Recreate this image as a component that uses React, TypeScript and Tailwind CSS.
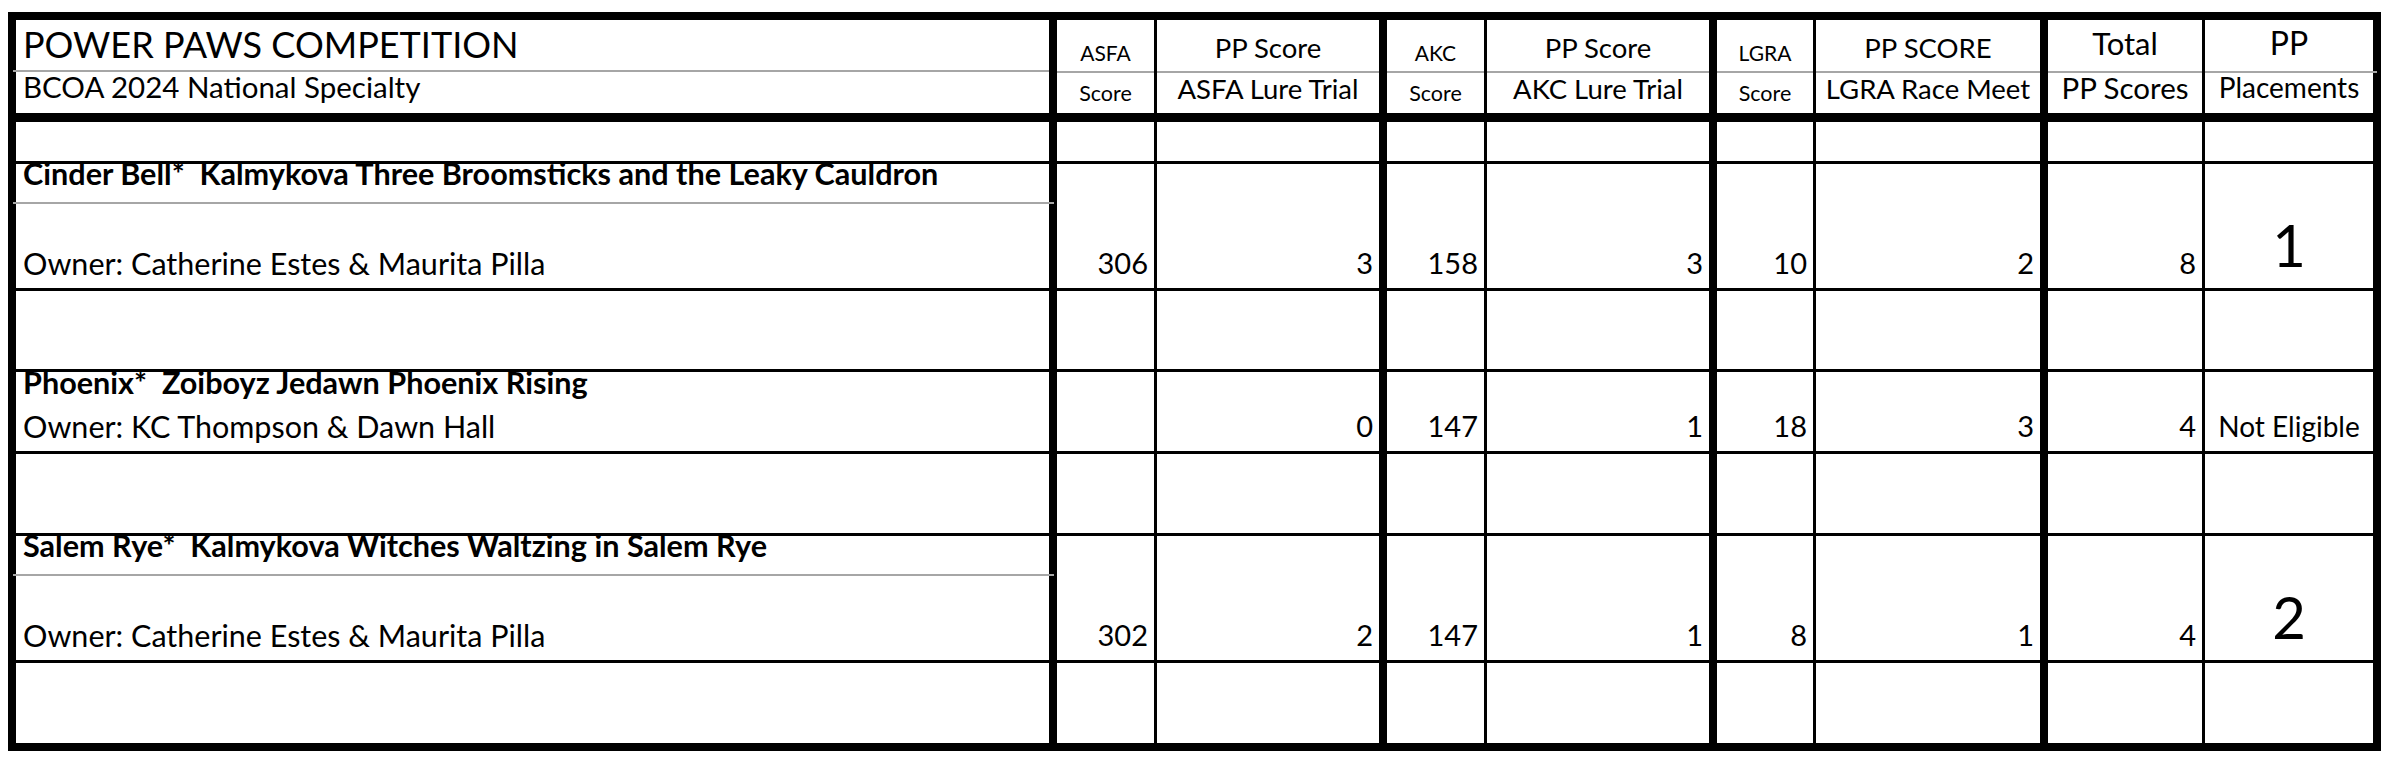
import React from 'react';

// column widths incl. right border
const COLS = [
  'w-[1041px] border-r-[8px]',
  'w-[100px] border-r-[3px]',
  'w-[230px] border-r-[8px]',
  'w-[100px] border-r-[3px]',
  'w-[230px] border-r-[8px]',
  'w-[99px] border-r-[3px]',
  'w-[232px] border-r-[8px]',
  'w-[157px] border-r-[3px]',
  'w-[168px]',
];

type Entry = {
  name: string;
  owner: string;
  asfa: string;
  asfaPP: string;
  akc: string;
  akcPP: string;
  lgra: string;
  lgraPP: string;
  total: string;
  place: string;
  tall: boolean;
};

const entries: Entry[] = [
  {
    name: 'Cinder Bell*\u00a0\u00a0Kalmykova Three Broomsticks and the Leaky Cauldron',
    owner: 'Owner: Catherine Estes & Maurita Pilla',
    asfa: '306', asfaPP: '3', akc: '158', akcPP: '3', lgra: '10', lgraPP: '2', total: '8', place: '1',
    tall: true,
  },
  {
    name: 'Phoenix*\u00a0\u00a0Zoiboyz Jedawn Phoenix Rising',
    owner: 'Owner: KC Thompson & Dawn Hall',
    asfa: '', asfaPP: '0', akc: '147', akcPP: '1', lgra: '18', lgraPP: '3', total: '4', place: 'Not Eligible',
    tall: false,
  },
  {
    name: 'Salem Rye*\u00a0\u00a0Kalmykova Witches Waltzing in Salem Rye',
    owner: 'Owner: Catherine Estes & Maurita Pilla',
    asfa: '302', asfaPP: '2', akc: '147', akcPP: '1', lgra: '8', lgraPP: '1', total: '4', place: '2',
    tall: true,
  },
];

const HeadCell = ({ col, top, bottom, topCls, bottomCls }: any) => (
  <div className={`${COLS[col]} border-black h-full flex flex-col shrink-0`}>
    <div className={`h-[51px] flex items-end justify-center leading-none whitespace-nowrap ${topCls}`}>{top}</div>
    <div className="h-[2px] bg-[#a6a6a6]" />
    <div className={`flex-1 flex items-end justify-center leading-none whitespace-nowrap ${bottomCls}`}>{bottom}</div>
  </div>
);

const EmptyRow = ({ h, last }: { h: string; last?: boolean }) => (
  <div className={`flex ${h} ${last ? '' : 'border-b-[3px] border-black'}`}>
    {COLS.map((c, i) => (
      <div key={i} className={`${c} border-black h-full shrink-0`} />
    ))}
  </div>
);

const Num = ({ col, value }: { col: number; value: string }) => (
  <div className={`${COLS[col]} border-black h-full shrink-0 flex items-end justify-end pr-[6px] pb-[11px] text-[29px] leading-none`}>
    {value}
  </div>
);

const EntryRow = ({ e }: { e: Entry }) => (
  <div className={`flex ${e.tall ? 'h-[127px]' : 'h-[82px]'} border-b-[3px] border-black`}>
    <div className={`${COLS[0]} border-black h-full shrink-0 flex flex-col`}>
      <div className={`${e.tall ? 'h-[38px]' : 'h-[39px]'} flex items-end pl-[7px] pb-[12px] text-[30.6px] font-bold leading-none whitespace-nowrap`}>
        {e.name}
      </div>
      <div className="h-[2px] bg-[#a6a6a6] -ml-[3px] -mr-[5px]" />
      <div className="flex-1 flex items-end pl-[7px] pb-[10px] text-[30.5px] leading-none whitespace-nowrap">
        {e.owner}
      </div>
    </div>
    <Num col={1} value={e.asfa} />
    <Num col={2} value={e.asfaPP} />
    <Num col={3} value={e.akc} />
    <Num col={4} value={e.akcPP} />
    <Num col={5} value={e.lgra} />
    <Num col={6} value={e.lgraPP} />
    <Num col={7} value={e.total} />
    {e.place === 'Not Eligible' ? (
      <div className={`${COLS[8]} h-full shrink-0 flex items-end justify-center pb-[11px] text-[28px] leading-none whitespace-nowrap`}>
        {e.place}
      </div>
    ) : (
      <div className={`${COLS[8]} h-full shrink-0 flex items-end justify-center pb-[14px] text-[58px] leading-none`}>
        {e.place}
      </div>
    )}
  </div>
);

export default function App() {
  return (
    <div className="min-h-[760px] bg-white pt-[12px] pl-[8px] font-['Lato',sans-serif] text-black">
      <div className="w-[2373px] border-[8px] border-black">
        {/* header */}
        <div className="flex h-[102px] border-b-[9px] border-black">
          <div className={`${COLS[0]} border-black h-full flex flex-col shrink-0`}>
            <div className="h-[51px] flex items-end pl-[7px] pb-[8px] text-[36px] leading-none">POWER PAWS COMPETITION</div>
            <div className="h-[2px] bg-[#a6a6a6] -ml-[3px]" />
            <div className="flex-1 flex items-end pl-[7px] pb-[12px] text-[29.5px] leading-none">BCOA 2024 National Specialty</div>
          </div>
          <HeadCell col={1} top="ASFA" bottom="Score" topCls="text-[21px] pb-[8px]" bottomCls="text-[21.5px] pb-[9px]" />
          <HeadCell col={2} top="PP Score" bottom="ASFA Lure Trial" topCls="text-[27.5px] pb-[10px]" bottomCls="text-[27.5px] pb-[11px]" />
          <HeadCell col={3} top="AKC" bottom="Score" topCls="text-[21px] pb-[8px]" bottomCls="text-[21.5px] pb-[9px]" />
          <HeadCell col={4} top="PP Score" bottom="AKC Lure Trial" topCls="text-[27.5px] pb-[10px]" bottomCls="text-[27.5px] pb-[11px]" />
          <HeadCell col={5} top="LGRA" bottom="Score" topCls="text-[21px] pb-[8px]" bottomCls="text-[21.5px] pb-[9px]" />
          <HeadCell col={6} top="PP SCORE" bottom="LGRA Race Meet" topCls="text-[27.5px] pb-[10px]" bottomCls="text-[27.5px] pb-[11px]" />
          <HeadCell col={7} top="Total" bottom="PP Scores" topCls="text-[31px] pb-[12px]" bottomCls="text-[29.5px] pb-[11px]" />
          <div className={`${COLS[8]} h-full flex flex-col shrink-0`}>
            <div className="h-[51px] flex items-end justify-center pb-[12px] text-[32px] leading-none">PP</div>
            <div className="h-[2px] bg-[#a6a6a6] -mr-[4px]" />
            <div className="flex-1 flex items-end justify-center pb-[12px] text-[28px] leading-none">Placements</div>
          </div>
        </div>

        <EmptyRow h="h-[42px]" />
        <EntryRow e={entries[0]} />
        <EmptyRow h="h-[81px]" />
        <EntryRow e={entries[1]} />
        <EmptyRow h="h-[82px]" />
        <EntryRow e={entries[2]} />
        <EmptyRow h="h-[80px]" last />
      </div>
    </div>
  );
}
